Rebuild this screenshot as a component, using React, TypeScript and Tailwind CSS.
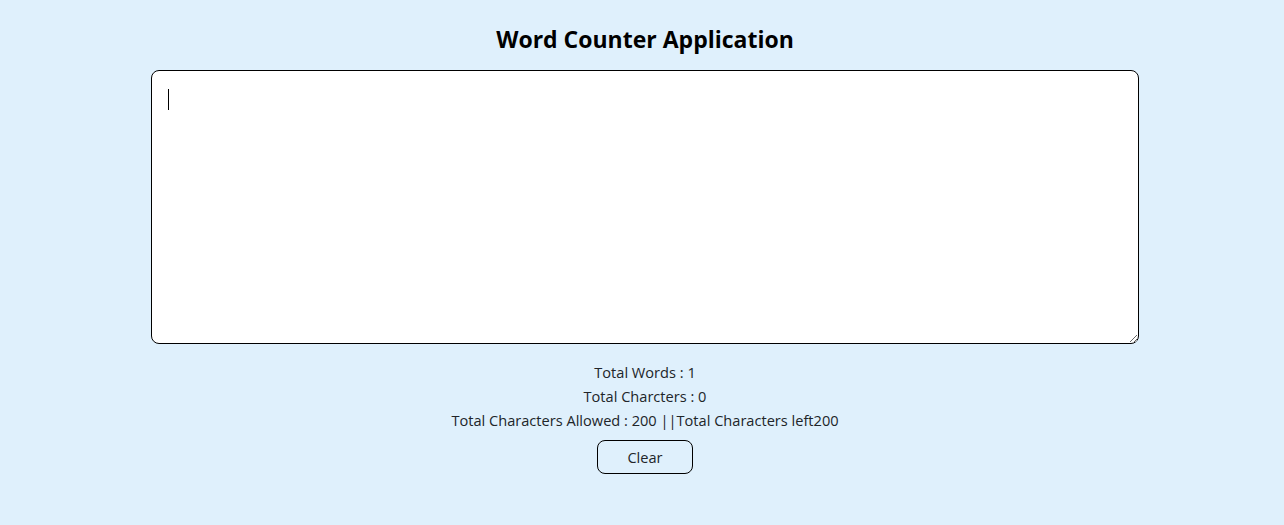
export default function App() {
  return (
    <div
      className="min-h-[525px] w-full bg-[#dff0fc] pt-[25px] pl-[6px] flex flex-col items-center text-[#212529]"
      style={{ fontFamily: '"Open Sans", "Noto Sans", sans-serif' }}
    >
      <h2 className="text-[23px] leading-[29px] font-bold text-black">Word Counter Application</h2>
      <div className="relative mt-[16px]">
        <textarea
          autoFocus
          className="block w-[988px] h-[274px] bg-white border border-black rounded-lg p-4 text-base leading-6 outline-none caret-black"
        />
        {/* text caret */}
        <span className="absolute left-[17px] top-[19px] w-px h-[21px] bg-black" />
      </div>
      <div className="mt-4 flex flex-col items-center text-[14.6px] leading-6">
        <p>Total Words : 1</p>
        <p>Total Charcters : 0</p>
        <p>Total Characters Allowed : 200 ||Total Characters left200</p>
      </div>
      <button className="mt-2 w-[96px] h-[34px] pt-px border border-black rounded-lg text-[14.6px] text-[#212529]">
        Clear
      </button>
    </div>
  );
}
